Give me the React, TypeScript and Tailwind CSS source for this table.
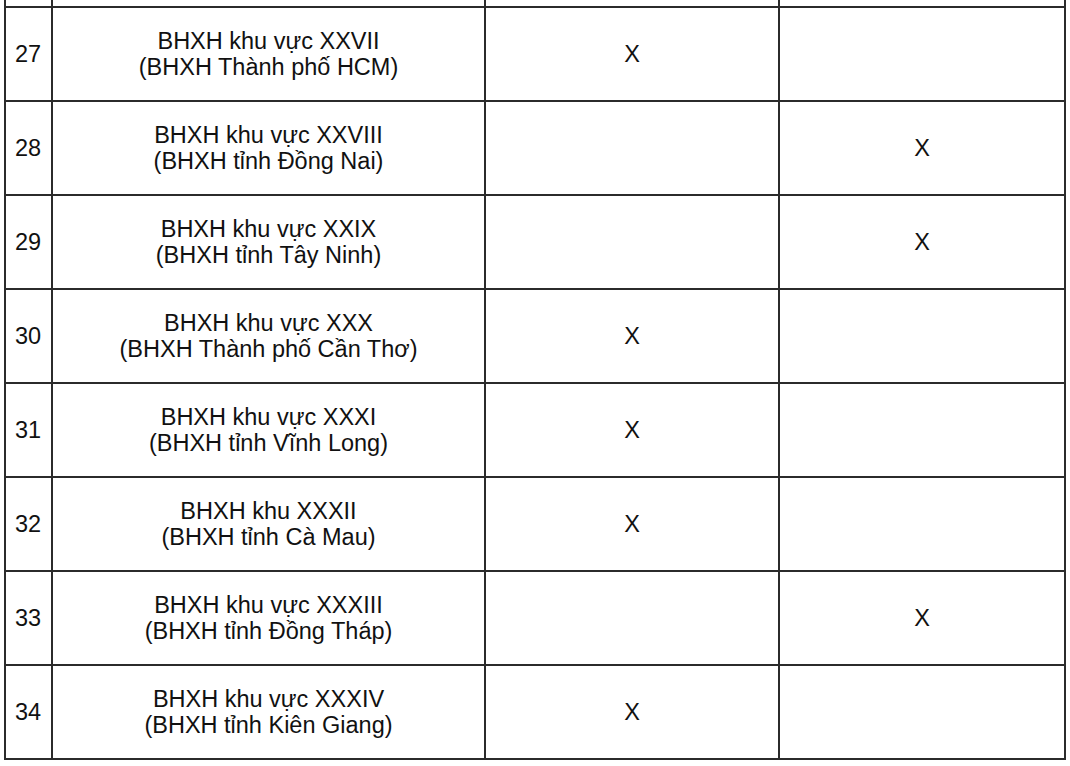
const rows = [
  { no: 27, name: "BHXH khu vực XXVII", sub: "(BHXH Thành phố HCM)", col: 1 },
  { no: 28, name: "BHXH khu vực XXVIII", sub: "(BHXH tỉnh Đồng Nai)", col: 2 },
  { no: 29, name: "BHXH khu vực XXIX", sub: "(BHXH tỉnh Tây Ninh)", col: 2 },
  { no: 30, name: "BHXH khu vực XXX", sub: "(BHXH Thành phố Cần Thơ)", col: 1 },
  { no: 31, name: "BHXH khu vực XXXI", sub: "(BHXH tỉnh Vĩnh Long)", col: 1 },
  { no: 32, name: "BHXH khu XXXII", sub: "(BHXH tỉnh Cà Mau)", col: 1 },
  { no: 33, name: "BHXH khu vực XXXIII", sub: "(BHXH tỉnh Đồng Tháp)", col: 2 },
  { no: 34, name: "BHXH khu vực XXXIV", sub: "(BHXH tỉnh Kiên Giang)", col: 1 },
];

const cell = "border-2 border-[#2b2b2b]";

export default function App() {
  return (
    <div className="w-[1070px] h-[766px] overflow-hidden bg-white font-['Liberation_Sans',Arial,sans-serif] text-[23.5px] leading-[26px] text-[#111]">
      <table className="ml-[4px] w-[1060px] border-collapse table-fixed">
        <colgroup>
          <col className="w-[47px]" />
          <col className="w-[433px]" />
          <col className="w-[294px]" />
          <col className="w-[286px]" />
        </colgroup>
        <tbody>
          <tr className="h-[7px]">
            <td className={`${cell} border-t-0`} />
            <td className={`${cell} border-t-0`} />
            <td className={`${cell} border-t-0`} />
            <td className={`${cell} border-t-0`} />
          </tr>
          {rows.map((r) => (
            <tr key={r.no} className="h-[94px]">
              <td className={`${cell} pl-[9px]`}>{r.no}</td>
              <td className={`${cell} text-center`}>
                {r.name}
                <br />
                {r.sub}
              </td>
              <td className={`${cell} text-center`}>{r.col === 1 ? "X" : ""}</td>
              <td className={`${cell} text-center`}>{r.col === 2 ? "X" : ""}</td>
            </tr>
          ))}
        </tbody>
      </table>
    </div>
  );
}
